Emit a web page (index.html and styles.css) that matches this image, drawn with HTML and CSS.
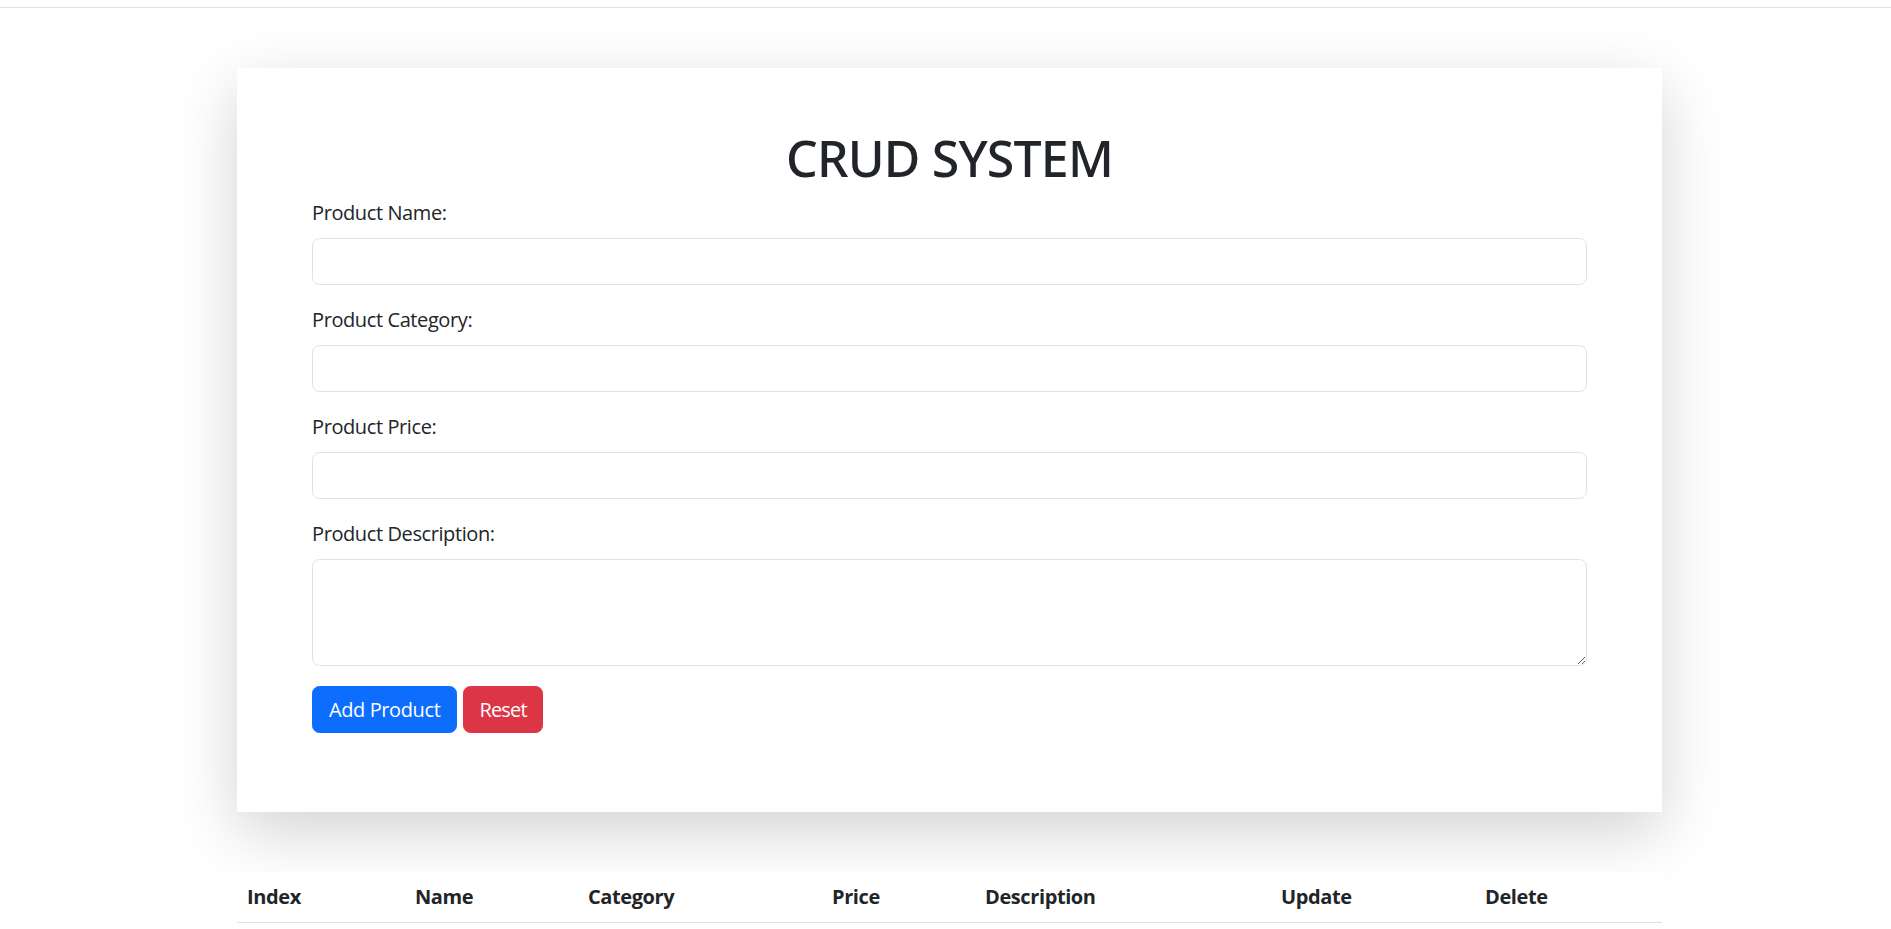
FILE: index.html
```html
<!DOCTYPE html>
<html lang="en">
<head>
<meta charset="utf-8">
<title>CRUD SYSTEM</title>
<link rel="stylesheet" href="styles.css">
</head>
<body>
<div class="topbar"></div>
<main class="page">
  <section class="card">
    <h1 class="title">CRUD SYSTEM</h1>
    <form class="form">
      <div class="field">
        <label class="label" for="productName">Product Name:</label>
        <input class="control" id="productName" type="text">
      </div>
      <div class="field">
        <label class="label" for="productCategory">Product Category:</label>
        <input class="control" id="productCategory" type="text">
      </div>
      <div class="field">
        <label class="label" for="productPrice">Product Price:</label>
        <input class="control" id="productPrice" type="text">
      </div>
      <div class="field">
        <label class="label" for="productDesc">Product Description:</label>
        <textarea class="control area" id="productDesc" rows="3"></textarea>
      </div>
      <div class="actions">
        <button type="button" class="btn btn-primary">Add Product</button>
        <button type="button" class="btn btn-danger">Reset</button>
      </div>
    </form>
  </section>
  <table class="table">
    <thead>
      <tr>
        <th class="col-index">Index</th>
        <th class="col-name">Name</th>
        <th class="col-category">Category</th>
        <th class="col-price">Price</th>
        <th class="col-desc">Description</th>
        <th class="col-update">Update</th>
        <th class="col-delete">Delete</th>
      </tr>
    </thead>
    <tbody></tbody>
  </table>
</main>
</body>
</html>
```
FILE: styles.css
```css
* {
  box-sizing: border-box;
}

body {
  margin: 0;
  font-family: "Open Sans", "Noto Sans", sans-serif;
  font-size: 20px;
  line-height: 1.5;
  color: #212529;
  background: #fff;
  letter-spacing: -0.4px;
}

.topbar {
  height: 8px;
  border-bottom: 1px solid #dee2e6;
}

.page {
  width: 1425px;
  margin-left: 237px;
}

.card {
  background: #fff;
  margin: 60px 0 60px;
  padding: 60px 75px;
  box-shadow: 0 20px 60px rgba(0, 0, 0, 0.175);
}

.title {
  margin: 0 0 10px;
  font-family: "Noto Sans", "Open Sans", sans-serif;
  font-size: 50px;
  font-weight: 500;
  line-height: 1.2;
  text-align: center;
  letter-spacing: -0.8px;
}

.field {
  display: flex;
  flex-direction: column;
  margin-bottom: 20px;
}

.label {
  margin-bottom: 10px;
  line-height: 30px;
}

.control {
  display: block;
  width: 100%;
  height: 47px;
  padding: 7.5px 15px;
  border: 1px solid #dee2e6;
  border-radius: 7.5px;
  font: inherit;
  color: #212529;
  background: #fff;
  outline: none;
}

.area {
  height: 107px;
  resize: vertical;
}

.actions {
  display: flex;
  gap: 6px;
  margin-bottom: 19px;
}

.btn {
  height: 47px;
  padding: 0 16px;
  border: 1px solid transparent;
  border-radius: 7.5px;
  font: inherit;
  letter-spacing: -0.4px;
  color: #fff;
  cursor: pointer;
}

.btn-primary {
  background: #0d6efd;
  border-color: #0d6efd;
}

.btn-danger {
  padding: 0 15px;
  letter-spacing: -0.8px;
  background: #dc3545;
  border-color: #dc3545;
}

.table {
  width: 1425px;
  border-collapse: collapse;
  table-layout: fixed;
  background: #fff;
}

.table th {
  padding: 10px;
  text-align: left;
  font-weight: 700;
  line-height: 30px;
  border-bottom: 1px solid #dee2e6;
  white-space: nowrap;
}

.col-index { width: 168px; }
.col-name { width: 173px; }
.col-category { width: 244px; }
.col-price { width: 153px; }
.col-desc { width: 296px; }
.col-update { width: 204px; }
.col-delete { width: 187px; }
```
